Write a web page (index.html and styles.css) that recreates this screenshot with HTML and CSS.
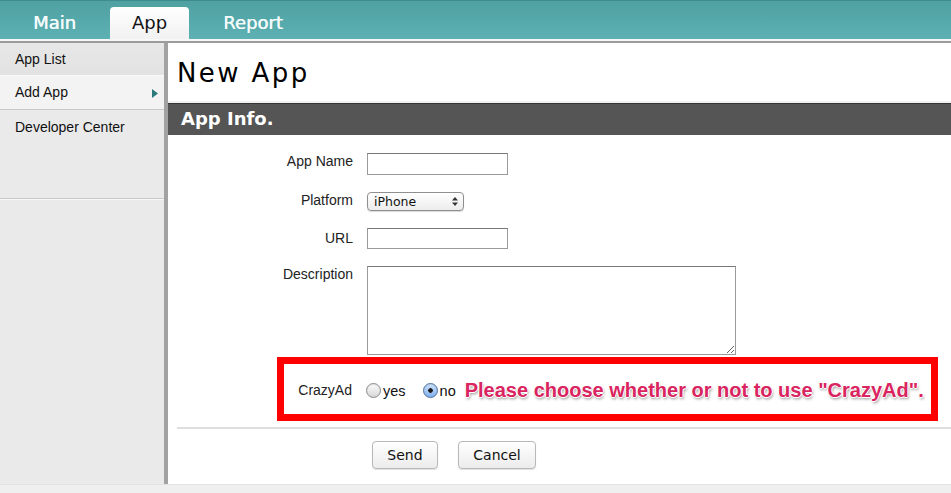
FILE: index.html
```html
<!DOCTYPE html>
<html>
<head>
<meta charset="utf-8">
<title>New App</title>
<link rel="stylesheet" href="styles.css">
</head>
<body>
<div class="page">
  <div class="topwrap">
    <nav class="topbar">
      <a class="tab">Main</a>
      <a class="tab active">App</a>
      <a class="tab">Report</a>
    </nav>
  </div>
  <div class="body">
    <aside class="sidebar">
      <div class="side-item first">App List</div>
      <div class="side-item current">Add App
        <svg class="arrow" width="6" height="9" viewBox="0 0 6 9"><path d="M0 0 L6 4.5 L0 9 Z" fill="#2d7a7c"/></svg>
      </div>
      <div class="side-item tall">Developer Center</div>
    </aside>
    <main class="main">
      <h1 class="title">New App</h1>
      <h2 class="section">App Info.</h2>
      <form class="form">
        <div class="grid">
          <label class="lbl">App Name</label>
          <input class="text" type="text">
          <label class="lbl">Platform</label>
          <div class="select-wrap">
            <select class="select"><option>iPhone</option></select>
            <svg class="updown" width="6" height="9" viewBox="0 0 6 9"><path d="M0 3.5 L3 0 L6 3.5 Z M0 5.5 L3 9 L6 5.5 Z" fill="#333"/></svg>
          </div>
          <label class="lbl url">URL</label>
          <input class="text url-in" type="text">
          <label class="lbl">Description</label>
          <textarea class="area"></textarea>
        </div>
        <div class="annot">
          <span class="lbl crazy">CrazyAd</span>
          <label class="opt yes"><input type="radio" name="crazy" class="radio">yes</label>
          <label class="opt no"><input type="radio" name="crazy" class="radio" checked>no</label>
          <span class="note">Please choose whether or not to use "CrazyAd".</span>
        </div>
        <hr class="rule">
        <div class="buttons">
          <button type="button" class="btn send">Send</button>
          <button type="button" class="btn cancel">Cancel</button>
        </div>
      </form>
    </main>
  </div>
  <div class="foot"></div>
</div>
</body>
</html>
```
FILE: styles.css
```css
html, body {
  margin: 0;
  padding: 0;
}
body {
  width: 951px;
  height: 493px;
  overflow: hidden;
  background: #ededed;
  font-family: "Liberation Sans", Arial, sans-serif;
}
.page {
  display: flex;
  flex-direction: column;
  height: 493px;
}
.topwrap {
  border-bottom: 2px solid #9c9c9c;
}
.topbar {
  height: 38px;
  border-top: 1px solid #3f8c8e;
  border-bottom: 2px solid #f7f7f7;
  background: linear-gradient(#4fa1a2, #5db1b2);
  display: flex;
  align-items: flex-end;
  gap: 12px;
  padding-left: 11px;
}
.tab {
  font-family: "DejaVu Sans", Verdana, sans-serif;
  font-size: 18px;
  color: #f4fbfb;
  padding: 0 22px;
  height: 32px;
  line-height: 31px;
  text-shadow: 0.4px 0 0 #f4fbfb;
}
.tab.active {
  background: linear-gradient(#ffffff, #f1f1f1);
  color: #111;
  border-radius: 4px 4px 0 0;
  text-shadow: none;
}
.body {
  flex: 1;
  display: flex;
  min-height: 0;
}
.sidebar {
  width: 164px;
  border-right: 4px solid #a2a2a2;
  background: #eaeaea;
  font-size: 14px;
  color: #111;
}
.side-item {
  padding-left: 15px;
  height: 32px;
  line-height: 32px;
  position: relative;
}
.side-item.first {
  background: linear-gradient(#e7e7e7, #e2e2e2);
  border-bottom: 1px solid #f9f9f9;
}
.side-item.current {
  height: 33px;
  line-height: 33px;
  background: #f3f3f3;
  border-bottom: 1px solid #c9c9c9;
}
.arrow {
  position: absolute;
  right: 6px;
  top: 13px;
}
.side-item.tall {
  height: 88px;
  line-height: 34px;
  border-bottom: 1px solid #c9c9c9;
  box-shadow: 0 1px 0 #f7f7f7;
}
.main {
  flex: 1;
  background: #fff;
  display: flex;
  flex-direction: column;
}
.title {
  margin: 0;
  height: 58px;
  line-height: 60px;
  padding-left: 9px;
  font-family: "DejaVu Sans", Verdana, sans-serif;
  font-weight: normal;
  font-size: 26px;
  letter-spacing: 2.4px;
  color: #000;
  border-bottom: 2px solid #f1f1f1;
}
.section {
  margin: 0;
  height: 31px;
  line-height: 30px;
  border-top: 1px solid #333;
  background: #555555;
  color: #fff;
  font-family: "DejaVu Sans", Verdana, sans-serif;
  font-weight: bold;
  font-size: 18px;
  padding-left: 13px;
}
.form {
  display: flex;
  flex-direction: column;
}
.grid {
  display: grid;
  grid-template-columns: 185px auto;
  column-gap: 14px;
  row-gap: 17px;
  padding-top: 18px;
  justify-items: start;
}
.lbl {
  justify-self: end;
  align-self: start;
  font-size: 14px;
  line-height: 17px;
  color: #222;
}
.lbl.url {
  padding-top: 2px;
}
.text {
  box-sizing: border-box;
  width: 141px;
  height: 22px;
  margin: 0;
  border: 1px solid #9a9a9a;
  border-top-color: #777;
  background: #fff;
  padding: 0 3px;
}
.text.url-in {
  height: 21px;
}
.select-wrap {
  position: relative;
  width: 97px;
  height: 19px;
}
.select {
  appearance: none;
  -webkit-appearance: none;
  box-sizing: border-box;
  width: 97px;
  height: 19px;
  margin: 0;
  border: 1px solid #8f8f8f;
  border-radius: 4px;
  background: linear-gradient(#ffffff, #ececec);
  font-family: "DejaVu Sans", Verdana, sans-serif;
  font-size: 12.5px;
  color: #111;
  padding: 0 0 0 6px;
  line-height: 17px;
  box-shadow: 0 1px 1px rgba(0,0,0,0.15);
}
.updown {
  position: absolute;
  right: 6px;
  top: 5px;
  pointer-events: none;
}
.area {
  box-sizing: border-box;
  width: 369px;
  height: 89px;
  margin: 0;
  border: 1px solid #9a9a9a;
  border-top-color: #777;
  resize: both;
  padding: 2px;
}
.annot {
  box-sizing: border-box;
  margin: 2px 13px 0 109px;
  height: 64px;
  border: 7px solid #ff0000;
  display: flex;
  align-items: center;
  padding-top: 3px;
}
.lbl.crazy {
  width: 68px;
  text-align: right;
  align-self: center;
  margin-right: 14px;
}
.opt {
  display: flex;
  align-items: center;
  font-size: 14.5px;
  color: #111;
}
.opt.yes {
  margin-right: 17px;
}
.opt.no {
  margin-right: 9px;
}
.radio {
  appearance: none;
  -webkit-appearance: none;
  width: 15px;
  height: 15px;
  margin: 0 2px 0 0;
  border-radius: 50%;
  border: 1px solid #8a8a8a;
  background: linear-gradient(#fdfdfd, #d6d6d6);
  box-shadow: inset 0 1px 1px rgba(0,0,0,0.1);
}
.radio:checked {
  border-color: #4a6f9e;
  background: radial-gradient(circle, #1b1b1b 0 2px, transparent 2.5px), linear-gradient(#cfe3fb, #7fb0ee);
}
.note {
  font-size: 20px;
  font-weight: bold;
  letter-spacing: 0;
  color: #d9245f;
  white-space: nowrap;
  text-shadow: 1px 0 0 #fff, -1px 0 0 #fff, 0 1px 0 #fff, 0 -1px 0 #fff, 1px 2px 3px rgba(0,0,0,0.45);
}
.rule {
  margin: 6px 0 0 9px;
  border: 0;
  height: 2px;
  background: #dedede;
}
.buttons {
  display: flex;
  gap: 20px;
  padding: 12px 0 0 204px;
}
.btn {
  height: 28px;
  margin: 0;
  border: 1px solid #b8b8b8;
  border-radius: 4px;
  background: linear-gradient(#ffffff, #ececec);
  font-family: "DejaVu Sans", Verdana, sans-serif;
  font-size: 14px;
  color: #111;
  box-shadow: 0 1px 1px rgba(0,0,0,0.12);
}
.btn.send {
  width: 66px;
}
.btn.cancel {
  width: 78px;
}
.foot {
  height: 8px;
  background: #efefef;
  border-top: 1px solid #e2e2e2;
}
```
